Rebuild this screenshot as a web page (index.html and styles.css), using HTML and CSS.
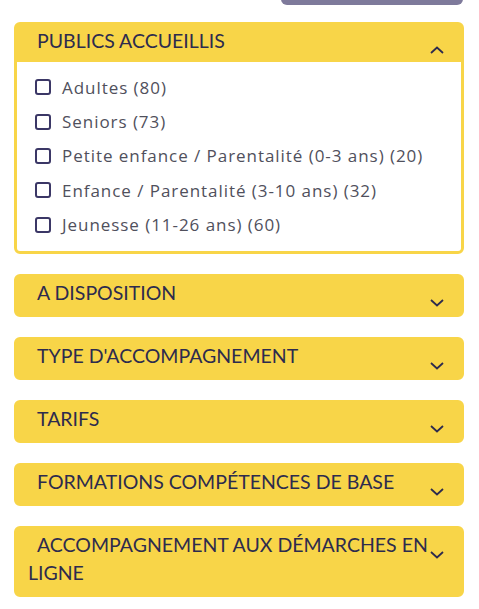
FILE: index.html
```html
<!DOCTYPE html>
<html lang="fr">
<head>
    <meta charset="UTF-8">
    <meta name="viewport" content="width=device-width, initial-scale=1.0">
    <title>Filtres</title>
    <link rel="stylesheet" href="styles.css">
</head>
<body>

    <div class="toolbar">
        <button class="reset-button" type="button" aria-label="Réinitialiser"></button>
    </div>

    <div class="filters">

        <div class="filter open">
            <div class="filter-header">
                <span class="filter-title">PUBLICS ACCUEILLIS</span>
                <svg class="chevron" width="14" height="8" viewBox="0 0 14 8"><polyline points="1,7 7,1.5 13,7" /></svg>
            </div>
            <div class="filter-body">
                <label class="option"><span class="box"></span>Adultes (80)</label>
                <label class="option"><span class="box"></span>Seniors (73)</label>
                <label class="option"><span class="box"></span>Petite enfance / Parentalité (0-3 ans) (20)</label>
                <label class="option"><span class="box"></span>Enfance / Parentalité (3-10 ans) (32)</label>
                <label class="option"><span class="box"></span>Jeunesse (11-26 ans) (60)</label>
            </div>
        </div>

        <div class="filter">
            <div class="filter-header">
                <span class="filter-title">A DISPOSITION</span>
                <svg class="chevron" width="14" height="8" viewBox="0 0 14 8"><polyline points="1,1 7,6.5 13,1" /></svg>
            </div>
        </div>

        <div class="filter">
            <div class="filter-header">
                <span class="filter-title">TYPE D'ACCOMPAGNEMENT</span>
                <svg class="chevron" width="14" height="8" viewBox="0 0 14 8"><polyline points="1,1 7,6.5 13,1" /></svg>
            </div>
        </div>

        <div class="filter">
            <div class="filter-header">
                <span class="filter-title">TARIFS</span>
                <svg class="chevron" width="14" height="8" viewBox="0 0 14 8"><polyline points="1,1 7,6.5 13,1" /></svg>
            </div>
        </div>

        <div class="filter">
            <div class="filter-header">
                <span class="filter-title">FORMATIONS COMPÉTENCES DE BASE</span>
                <svg class="chevron" width="14" height="8" viewBox="0 0 14 8"><polyline points="1,1 7,6.5 13,1" /></svg>
            </div>
        </div>

        <div class="filter">
            <div class="filter-header">
                <span class="filter-title">ACCOMPAGNEMENT AUX DÉMARCHES EN LIGNE</span>
                <svg class="chevron" width="14" height="8" viewBox="0 0 14 8"><polyline points="1,1 7,6.5 13,1" /></svg>
            </div>
        </div>

    </div>

</body>
</html>
```

FILE: styles.css
```css
* {
    margin: 0;
    padding: 0;
    box-sizing: border-box;
}

body {
    font-family: 'Lato', 'Open Sans', sans-serif;
    background: #ffffff;
    color: #2d2b4e;
}


.toolbar {
    display: flex;
    justify-content: flex-end;
    padding-right: 16px;
}

.reset-button {
    width: 182px;
    height: 36px;
    margin-top: -31px;
    border: none;
    border-radius: 0 0 6px 6px;
    background: #7e7a9b;
}


.filters {
    display: flex;
    flex-direction: column;
    gap: 20px;
    padding: 17px 15px 0 14px;
}

.filter {
    background: #f8d548;
    border: 3px solid #f8d548;
    border-radius: 6px;
}

.filter-header {
    display: flex;
    justify-content: space-between;
    align-items: flex-start;
    min-height: 37px;
    padding: 2px 17px 7px 11px;
}

.filter-title {
    font-size: 19.5px;
    line-height: 28px;
    text-indent: 9px;
    color: #2d2b4e;
}

.chevron {
    flex-shrink: 0;
    margin-top: 20px;
    fill: none;
    stroke: #2d2b4e;
    stroke-width: 1.8;
}

.filter.open .chevron {
    margin-top: 19px;
}


.filter-body {
    background: #ffffff;
    border-radius: 0 0 3px 3px;
    padding: 8px 0 9px 18px;
}

.option {
    display: flex;
    align-items: center;
    gap: 11px;
    height: 34.4px;
    font-family: 'Open Sans', 'Lato', sans-serif;
    font-size: 17px;
    letter-spacing: 0.95px;
    color: #50505c;
}

.box {
    width: 16px;
    height: 16px;
    border: 2px solid #3b3766;
    border-radius: 3px;
    flex-shrink: 0;
}
```
